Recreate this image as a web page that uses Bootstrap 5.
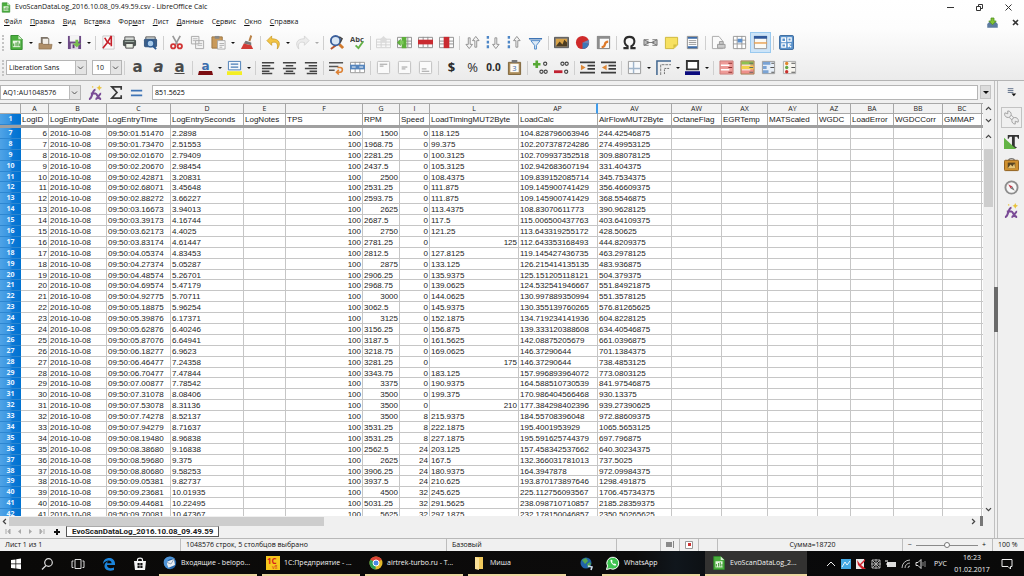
<!DOCTYPE html>
<html lang="ru">
<head>
<meta charset="utf-8">
<meta name="viewport" content="width=device-width, initial-scale=1">
<title>EvoScanDataLog_2016.10.08_09.49.59.csv - LibreOffice Calc</title>
<link href="https://cdn.jsdelivr.net/npm/bootstrap@5.3.0/dist/css/bootstrap.min.css" rel="stylesheet">
<style>
  :root { --ui: "Open Sans", "Noto Sans", sans-serif; --cell: "Liberation Sans", Arial, sans-serif; --line: #c6c6c6; --edge: #a8a8a8; }
  body { font: 7px/12px var(--ui); color: #111; background: #f0f0f0; }
  svg { display: block; }
  .shrinkable { min-width: 0; min-height: 0; }
  .app-top { background: linear-gradient(#fff 0, #fdfdfd 35%, #ebebeb 100%); border-bottom: 1px solid #b4b4b4; }
  .title-row { height: 14px; padding-left: 1px; }
  .win-ctl { gap: 8px; padding-right: 5px; }
  .menu-row { height: 16px; padding: 0 0 0 4px; gap: 8px; }
  .menu-row a { color: #111; text-decoration: none; }
  .bar-row { height: 25px; }
  .grip { width: 3px; height: 16px; margin: 0 1px 0 2px; border-left: 2px dotted #c4c4c4; flex: none; }
  .tb { width: 21px; height: 21px; padding: 0; border-radius: 0; border: 1px solid transparent; display: flex; align-items: center; justify-content: center; flex: none; }
  .tb svg { width: 15px; height: 15px; }
  .tb.active { background: #cce4f8; border-color: #99c9ef; }
  .dd { width: 8px; height: 21px; padding: 0; border: 0; background: none; display: flex; align-items: center; justify-content: center; flex: none; }
  .dd::after { content: ""; border: 2px solid transparent; border-top-color: #111; margin-top: 2px; }
  .dd:disabled::after { border-top-color: #aaa; }
  .gap-line { width: 1px; height: 14px; background: #cfcfcf; margin: 0 2px; flex: none; }
  .pick { height: 15px; border: 1px solid #b5b5b5; border-radius: 0; padding: 0 12px 0 2px; font: 7px/13px var(--ui); color: #111; appearance: none;
    background: #fff url("data:image/svg+xml,%3Csvg xmlns='http://www.w3.org/2000/svg' width='11' height='13'%3E%3Cpath d='M0 0h11v13H0z' fill='%23e4e4e4'/%3E%3Cpath d='M.5 0v13' stroke='%23bbb'/%3E%3Cpath d='M3 5.500l2.500 2.500 2.500-2.500' fill='none' stroke='%23555'/%3E%3C/svg%3E") no-repeat right center; }
  .pick-font { width: 81px; margin-right: 5px; }
  .pick-size { width: 30px; padding-left: 3px; }
  .pick-name { width: 81px; }
  .glyph { font: 700 15px/15px "DejaVu Sans", sans-serif; color: #4a4a4a; }
  .ink { font: 700 12px/9px "DejaVu Sans", sans-serif; color: #3c6eae; }
  .ink.tb { width: 15px; height: 15px; margin: 0 3px; border-bottom: 4px solid #7b0d10; }
  .money { font: 13px/15px "Open Sans", sans-serif; color: #2b2b2b; }
  .digits { font: 10px/15px "Open Sans", sans-serif; color: #2b2b2b; }
  .formula-row { height: 22px; padding: 0 3px 0 0; }
  .formula-row input { font: 7px/13px var(--ui); height: 15px; border: 1px solid #b5b5b5; border-radius: 0; padding: 0 2px; background: #fff; min-width: 0; }
  .expand { width: 11px; height: 14px; border: 1px solid #c4c4c4; background: #dcdcdc; padding: 0; margin-left: 2px; display: flex; align-items: center; justify-content: center; }
  .expand::after { content: ""; border: 3px solid transparent; border-top-color: #111; margin-top: 3px; }
  .grid-clip { overflow: hidden; }
  .calc { width: 100%; display: block; font: 8px/11px var(--cell); color: #222; background: #fff; }
  .calc thead, .calc tbody { display: grid; width: 100%; }
  .calc tr { display: grid; grid-template-columns: 21px 28px 58px 64px 73px 42px 77px 37px 30px 89px 79px 74px 50px 46px 50px 33px 43px 49px 39px minmax(3px, 1fr); min-height: 0; }
  .calc th, .calc td { padding: 0 1px; border-right: 1px solid var(--line); border-bottom: 1px solid var(--line); white-space: pre; overflow: hidden; font-weight: 400; min-width: 0; min-height: 0; }
  .calc tr > :last-child { border-right: 0; }
  .calc .letters th { height: 11px; font: 7px/10px var(--ui); text-align: center; background: #f2f2f2; border-color: var(--edge); border-top: 1px solid var(--edge); }
  .calc .letters th.sel-edge { border-right: 2px solid #3f9bea; }
  .calc .names td { height: 11px; border-bottom: 0; border-color: var(--edge); }
  .calc th.rowno { background: linear-gradient(90deg, #4fa3e6 0, #3795e2 45%, #0b78d6 58%, #0072d0 100%); color: #e8f4ff; font: 700 7px/10px var(--ui); text-align: center; border-color: #2d86d0; border-right: 0; }
  .calc thead { border-bottom: 3px solid #a0a0a0; }
  /* 36 equal rows share the height of the scrolled pane */
  .calc tbody { grid-template-rows: repeat(36, minmax(0, 1fr)); height: 392px; }
  .num { text-align: right; }
  .vbar { width: 11px; gap: 3px; padding: 1px 0 2px; }
  .vbar svg, .hbar svg { width: 9px; height: 9px; flex: none; }
  .vbar-thumb { width: 9px; height: 58px; background: #cdcdcd; margin: 5px 0 auto; }
  .hbar { height: 10px; padding-right: 11px; }
  .hbar-thumb { height: 9px; width: 32%; background: #cdcdcd; }
  .hbar-split { width: 3px; height: 10px; background: #777; margin-left: 2px; }
  .tab-row { height: 12px; padding-left: 5px; }
  .tab-row button { border: 0; background: none; padding: 0; width: 11px; height: 10px; }
  .sheet-tab { background: #fff; border: 1px solid #555; border-top-color: #aaa; padding: 0 5px; margin-left: 2px; font: 700 8px/9px Roboto, sans-serif; color: #222; text-decoration: none; }
  .splitter { width: 4px; border: 1px solid #c0c0c0; border-width: 0 1px; }
  .splitter span { height: 45px; width: 4px; background: #6a6a6a; margin-left: -1px; flex: none; }
  .side { width: 26px; gap: 2px; }
  .side .boxed { border-color: #c3c3c3; margin: 3px 0 1px; }
  .status { height: 13px; border-top: 1px solid #b8b8b8; line-height: 12px; }
  .status > div { border-right: 1px solid #bdbdbd; padding-left: 5px; overflow: hidden; white-space: nowrap; }
  .st-a { width: 181px; } .st-b { width: 266px; } .st-c { width: 170px; } .st-d { width: 44px; } .st-e { width: 19px; }
  .st-z { width: 90px; } .st-p { width: 31px; }
  .zoom { appearance: none; width: 62px; height: 8px; background: linear-gradient(#8a8a8a, #8a8a8a) center/100% 1px no-repeat; margin: 0; }
  .zoom::-webkit-slider-thumb { appearance: none; width: 6px; height: 6px; border-radius: 50%; border: 1px solid #777; background: #fff; }
  .taskbar-row { height: 25px; background: linear-gradient(90deg, #0a0908 0, #0c0b0b 62%, #10161c 66%, #0a0a0b 72%, #090909 100%); color: #f2f2f2; }
  .taskbar-row button { border: 0; background: none; color: inherit; padding: 0; height: 25px; flex: none; font: 7px/22px var(--ui); }
  .launch { width: 31px; display: flex; align-items: center; justify-content: center; }
  .launch svg, .win svg { width: 14px; height: 14px; flex: none; }
  .taskbar-row .win { width: 98px; margin-right: 5px; padding: 0 4px; display: flex; align-items: center; gap: 4px; border-bottom: 2px solid #ecd6a0; white-space: nowrap; text-align: left; }
  .taskbar-row .win.now { background: #333231; width: 102px; padding-left: 7px; margin: 0; }
  .tray { gap: 3px; }
  .tray svg { width: 12px; height: 12px; }
  .clock { line-height: 12px; width: 44px; text-align: center; }
</style>
</head>
<body class="vh-100 d-flex flex-column overflow-hidden">

<svg width="0" height="0" class="position-absolute" aria-hidden="true">
  <symbol id="doc" viewBox="0 0 16 16"><path d="M2 .5h8l4 4v11H2z" fill="#4caf3e" stroke="#2f8a2b"/><path d="M10 .5v4h4z" fill="#d7f0d0"/><path d="M4 6h8v7H4z" fill="#e9f7e4"/><path d="M5 12V9m2.500 3V8m2 4V7m2 5V9" stroke="#4a9c3c" stroke-width="1.200"/></symbol>
  <symbol id="open" viewBox="0 0 16 16"><path d="M3 2h7l2 2v7H3z" fill="#7e7468"/><path d="M5 4h6v6H5z" fill="#f3efe8"/><path d="M1 9h4l1 1h9l-1 5H1z" fill="#b08f68" stroke="#8a6c49" stroke-width=".7"/></symbol>
  <symbol id="save" viewBox="0 0 16 16"><path d="M1 1h14v14H1z" fill="#6d4a86"/><path d="M3 1h10v6H3z" fill="#f4f4f4"/><path d="M4 9h8v6H4z" fill="#dcd6e2"/><path d="M6 10h2v4H6z" fill="#5b3a74"/><path d="M9 5h3v4h3l-4.500 4L6 9h3z" fill="#77bf4b"/></symbol>
  <symbol id="pdf" viewBox="0 0 16 16"><path d="M2 1h12v14H2z" fill="#fafafa" stroke="#c9c9c9"/><path d="M2 14C6 10 9 5 11 1v11M4 3c1 3 3 5 6 7" fill="none" stroke="#c6202a" stroke-width="1.700"/></symbol>
  <symbol id="print" viewBox="0 0 16 16"><path d="M3 2h10v4H3z" fill="#d9dcd9" stroke="#555"/><rect x="1" y="5" width="14" height="7" rx="1.500" fill="#4f5854"/><path d="M4 9h8v5H4z" fill="#e9efe4" stroke="#444"/><path d="M3 7h10" stroke="#a8b4ac"/></symbol>
  <symbol id="preview" viewBox="0 0 16 16"><path d="M3 2h10v4H3z" fill="#d9dcd9" stroke="#555"/><rect x="1" y="4" width="14" height="9" rx="1.500" fill="#3f5f86"/><circle cx="8" cy="9" r="3.600" fill="#a9cbea" stroke="#2b5a93" stroke-width="1.400"/><path d="M11 12l3 3" stroke="#2b5a93" stroke-width="2"/></symbol>
  <symbol id="cut" viewBox="0 0 16 16"><path d="M4 1l5 9M12 1L7 10" stroke="#999" stroke-width="1.800"/><g fill="none" stroke="#d03434" stroke-width="2"><circle cx="4.500" cy="12" r="2.300"/><circle cx="11.500" cy="12" r="2.300"/></g></symbol>
  <symbol id="copy" viewBox="0 0 16 16"><path d="M1.500 1.500h8v8h-8zM6 6h8.500v8.500H6z" fill="#f4f4f4" stroke="#a9a9a9"/><path d="M3 4h5M3 6h3M8 9h5M8 11h5" stroke="#b5b5b5"/></symbol>
  <symbol id="paste" viewBox="0 0 16 16"><path d="M1 2h11v12H1z" fill="#c99a5b" stroke="#9b7442"/><path d="M4 1h5v3H4z" fill="#888"/><path d="M7 6h8v9H7z" fill="#fafafa" stroke="#aaa"/><path d="M9 9h5M9 11h5M9 13h3" stroke="#aaa"/></symbol>
  <symbol id="brush" viewBox="0 0 16 16"><path d="M11 0l2 1-2 6-2-1z" fill="#b98248"/><path d="M6 6l6 2v3L4 9z" fill="#777"/><path d="M4 9l8 2 2 4H1z" fill="#d13b35"/></symbol>
  <symbol id="undo" viewBox="0 0 16 16"><path d="M6 1L1 6l5 5V8c5-1 7 0 6 7 4-5 3-11-6-11z" fill="#f3c544" stroke="#c99a24" stroke-width=".8"/></symbol>
  <symbol id="redo" viewBox="0 0 16 16"><path d="M10 1l5 5-5 5V8c-5-1-7 0-6 7-4-5-3-11 6-11z" fill="#ececec" stroke="#cfcfcf" stroke-width=".8"/></symbol>
  <symbol id="find" viewBox="0 0 16 16"><path d="M9 8l6 6" stroke="#d27a2c" stroke-width="3"/><path d="M2 15l8-6" stroke="#b6532c" stroke-width="2"/><circle cx="7" cy="6" r="5" fill="#d9e6f4" stroke="#3b5f9c" stroke-width="2"/><path d="M11 2l3 2-2 4" fill="none" stroke="#444" stroke-width="1.500"/></symbol>
  <symbol id="rowadd" viewBox="0 0 16 16"><path d="M.5 4.500h15v9H.5zM.5 7.500h15M.5 10.500h15M5.500 4v9M10.500 4v9" fill="#f8f8f8" stroke="#d2d2d2"/><path d="M8 1l3 3v4H5V4z" fill="#dcdcdc"/></symbol>
  <symbol id="coladd" viewBox="0 0 16 16"><path d="M.5 2.500h15v11H.5zM.5 6.500h15M.5 9.500h15M11.500 2v11" fill="#fafafa" stroke="#8f8f8f"/><path d="M5 2h5v12H5zM0 8l4-4v8z" fill="#5cae3a"/><path d="M3 6h4v4H3z" fill="#7cc95a"/></symbol>
  <symbol id="rowdel" viewBox="0 0 16 16"><path d="M.5 2.500h15v11H.5zM5.500 2v11M10.500 2v11" fill="#fafafa" stroke="#8f8f8f"/><path d="M0 5h16v5H0z" fill="#c92a30"/></symbol>
  <symbol id="coldel" viewBox="0 0 16 16"><path d="M.5 2.500h15v11H.5zM.5 6.500h15M.5 9.500h15" fill="#fafafa" stroke="#8f8f8f"/><path d="M5 2h6v12H5z" fill="#c92a30"/></symbol>
  <symbol id="sort" viewBox="0 0 16 16"><path d="M3.500 3h2v7H8l-3.500 4.500L1 10h2.500zM10.500 13h2V6H15l-3.500-4.500L8 6h2.500z" fill="#f4f4f4" stroke="#8f8f8f"/></symbol>
  <symbol id="sortd" viewBox="0 0 16 16"><path d="M2 1v3M2 6v3M2 11v3" stroke="#4d86c6" stroke-width="2.500"/><path d="M9.500 3h2v7H14l-3.500 4.500L7 10h2.500z" fill="#f4f4f4" stroke="#8f8f8f"/></symbol>
  <symbol id="sorta" viewBox="0 0 16 16"><path d="M2 1v3M2 6v3M2 11v3" stroke="#4d86c6" stroke-width="2.500"/><path d="M9.500 13h2V6H14l-3.500-4.500L7 6h2.500z" fill="#f4f4f4" stroke="#8f8f8f"/></symbol>
  <symbol id="filter" viewBox="0 0 16 16"><path d="M1 4h14" stroke="#3e74b4" stroke-width="1.600"/><path d="M3 6h10L9 11v4H7v-4z" fill="#dce9f5" stroke="#4d86c6"/></symbol>
  <symbol id="image" viewBox="0 0 16 16"><path d="M.5 2.500h15v11H.5z" fill="#777" stroke="#555"/><path d="M2 4h12v8H2z" fill="#d8a348"/><path d="M2 12l4-5 3 3 2-5 3 3v4z" fill="#4d3d22"/></symbol>
  <symbol id="pie" viewBox="0 0 16 16"><circle cx="8" cy="8" r="7" fill="#cf2b2b"/><path d="M8 8l7 1a7 7 0 0 1-7 6z" fill="#3c78b8"/><path d="M8 8l7-3v4z" fill="#6a86b8"/></symbol>
  <symbol id="pivot" viewBox="0 0 16 16"><path d="M1.500 1.500h13v13h-13z" fill="#fafafa" stroke="#777"/><path d="M1 1h14v3H1zM1 4h3v11H1z" fill="#8d8d8d"/><path d="M6 13c6 0 1-6 7-6" fill="none" stroke="#df7a2a" stroke-width="2.400"/></symbol>
  <symbol id="omega" viewBox="0 0 16 16"><path d="M1.500 14H6v-2C1 9 2 2 8 2s7 7 2 10v2h4.500" fill="none" stroke="#2c2c2c" stroke-width="2.200"/></symbol>
  <symbol id="chain" viewBox="0 0 16 16"><path d="M1 5l6 3-6 3zM15 5L9 8l6 3zM1 5h5M10 5h5M1 11h5M10 11h5M4 8h8" fill="#bbb" stroke="#777"/></symbol>
  <symbol id="note" viewBox="0 0 16 16"><path d="M1.500 2.500h13v8l-4 4h-9z" fill="#f7e161" stroke="#cdb73c"/><path d="M14 10l-4 4v-4z" fill="#d6bf40"/></symbol>
  <symbol id="headf" viewBox="0 0 16 16"><path d="M2.500 1.500h11v13h-11z" fill="#fff" stroke="#888"/><path d="M3 3h10M3 13h10" stroke="#3d6ca8" stroke-width="2"/><path d="M4 6h8M4 8h8M4 10h8" stroke="#999"/></symbol>
  <symbol id="parea" viewBox="0 0 16 16"><path d="M1.500 1.500h7l4 5v8h-11z" fill="#fafafa" stroke="#aaa"/><path d="M7 10h8v4H7zM9 7h4v3H9z" fill="#ccc" stroke="#999"/></symbol>
  <symbol id="freeze" viewBox="0 0 16 16"><path d="M1.500 1.500h13v13h-13zM1 5.500h14M1 9.500h14M5.500 1v14M10.500 1v14" fill="#fff" stroke="#999"/><path d="M6 4h5v4H6z" fill="#5b8fcb"/></symbol>
  <symbol id="splitw" viewBox="0 0 16 16"><path d="M1.500 1.500h13v13h-13z" fill="#fbfbf6" stroke="#999"/><path d="M1 1h14v3H1z" fill="#30599b"/><path d="M1 8.500h14" stroke="#e8a050" stroke-width="1.500"/></symbol>
  <symbol id="draw" viewBox="0 0 16 16"><rect x=".5" y=".5" width="15" height="15" rx="1.500" fill="#5a92cb" stroke="#39689c"/><path d="M3 3h4v4H3zM9.500 3h3.500v3.500H9.500zM3 9.500h4v3.500H3zM9.500 10l3.500 3M10 13V9.500h3" fill="none" stroke="#fff" stroke-width="1.300"/></symbol>
  <symbol id="hilite" viewBox="0 0 16 16"><path d="M1.500 1.500h13v9h-13z" fill="#f5f9fd" stroke="#4a7cb5"/><path d="M4 4.500h8M4 7.500h8" stroke="#4a7cb5" stroke-width="1.300"/><path d="M0 12h16v4H0z" fill="#f4ee23"/></symbol>
  <symbol id="al" viewBox="0 0 16 16"><path d="M1 3h13M1 6h9M1 9h13M1 12h8M1 14.500h11" stroke="#444" stroke-width="1.600"/></symbol>
  <symbol id="ac" viewBox="0 0 16 16"><path d="M1 3h14M4 6h8M1 9h14M4 12h8M2 14.500h12" stroke="#444" stroke-width="1.600"/></symbol>
  <symbol id="ar" viewBox="0 0 16 16"><path d="M2 3h13M6 6h9M2 9h13M7 12h8M4 14.500h11" stroke="#444" stroke-width="1.600"/></symbol>
  <symbol id="wrap" viewBox="0 0 16 16"><path d="M0 3h15M0 7h10M0 11h6" stroke="#555" stroke-width="1.700"/><path d="M9 8h3c3 0 3 5 0 5H8m2.500-2.500L8 13l2.500 2.500" fill="none" stroke="#dd8133" stroke-width="1.700"/></symbol>
  <symbol id="merge" viewBox="0 0 16 16"><path d="M.5 2.500h15v11H.5zM5.500 2v11M10.500 2v11" fill="#fff" stroke="#999"/><path d="M0 5h16v5H0z" fill="#5585bd"/><path d="M2 7.500h4M10 7.500h4" stroke="#fff"/></symbol>
  <symbol id="vt" viewBox="0 0 16 16"><rect x="1.500" y="1.500" width="13" height="13" rx="1" fill="#fafafa" stroke="#bdbdbd"/><path d="M4 4.500h8M4 6.500h4" stroke="#999"/></symbol>
  <symbol id="vm" viewBox="0 0 16 16"><rect x="1.500" y="1.500" width="13" height="13" rx="1" fill="#fafafa" stroke="#bdbdbd"/><path d="M5 7.500h6M5 9.500h4" stroke="#999"/></symbol>
  <symbol id="vb" viewBox="0 0 16 16"><rect x="1.500" y="1.500" width="13" height="13" rx="1" fill="#fafafa" stroke="#bdbdbd"/><path d="M4 9.500h5M4 12h8" stroke="#999"/></symbol>
  <symbol id="decadd" viewBox="0 0 16 16"><path d="M0 4.500h8M4 .5v8" stroke="#57a935" stroke-width="2.800"/><g fill="none" stroke="#444" stroke-width="1.200"><circle cx="13" cy="4" r="1.700"/><circle cx="9" cy="12.500" r="1.700"/><circle cx="13.500" cy="12.500" r="1.700"/></g></symbol>
  <symbol id="decdel" viewBox="0 0 16 16"><path d="M0 12.500h9" stroke="#c02030" stroke-width="3"/><g fill="none" stroke="#444" stroke-width="1.200"><circle cx="9" cy="4" r="1.700"/><circle cx="13.500" cy="4" r="1.700"/><circle cx="13" cy="12.500" r="1.700"/></g></symbol>
  <symbol id="indin" viewBox="0 0 16 16"><path d="M0 2.500h16M8 6h8M8 9.500h8M0 13.500h16" stroke="#3c3c3c" stroke-width="1.700"/><path d="M1 5l5 3-5 3z" fill="#de8838"/></symbol>
  <symbol id="indout" viewBox="0 0 16 16"><path d="M0 2.500h16M8 6h8M8 9.500h8M0 13.500h16" stroke="#3c3c3c" stroke-width="1.700"/><path d="M6 5L1 8l5 3z" fill="#de8838"/></symbol>
  <symbol id="bord" viewBox="0 0 16 16"><path d="M1.500 1.500h13v13h-13z" fill="#f7f9fb" stroke="#999"/><path d="M7 2v12M2 9h12" stroke="#9fb4ca" stroke-width="1.500"/></symbol>
  <symbol id="bstyle" viewBox="0 0 16 16"><path d="M1 16V1h15" fill="none" stroke="#40668f" stroke-width="1.600"/><path d="M5 16V5h11" fill="none" stroke="#777" stroke-dasharray="3 1"/><path d="M9 15V9h6" fill="none" stroke="#666" stroke-dasharray="2 1"/></symbol>
  <symbol id="bcolor" viewBox="0 0 16 16"><path d="M2 1h12v9H2z" fill="#fff" stroke="#333" stroke-width="2"/><path d="M0 12h16v4H0z" fill="#0b0b7d"/></symbol>
  <symbol id="cf1" viewBox="0 0 16 16"><path d="M1 1h14v14H1z" fill="#ee9a97" stroke="#c9807c"/><path d="M2 5.500h9M2 10.500h9" stroke="#fff" stroke-width="1.600"/><path d="M10 3.500h4M10 8h4M10 13h4" stroke="#8b3030" stroke-width="1.200"/></symbol>
  <symbol id="cf2" viewBox="0 0 16 16"><path d="M1 1h14v14H1z" fill="#ee8f8a" stroke="#a08050"/><path d="M1.500 1.500h13V5h-13z" fill="#8cc152"/><path d="M1.500 6h13v4h-13z" fill="#f2d24b"/><path d="M2 5.500h9M2 10.500h9" stroke="#fff"/><path d="M10 3.500h4M10 8h4M10 13h4" stroke="#666" stroke-width="1.200"/></symbol>
  <symbol id="cf3" viewBox="0 0 16 16"><path d="M1.500 1.500h13v13h-13z" fill="#e6eef7" stroke="#999"/><path d="M2 3.500h8M2 8h4M2 12.500h6" stroke="#7aa3d4" stroke-width="3"/><path d="M11 3.500h3M10 8h4M11 13h3" stroke="#555" stroke-width="1.200"/></symbol>
  <symbol id="cf4" viewBox="0 0 16 16"><path d="M1.500 1.500h13v13h-13z" fill="#f7f5ef" stroke="#aaa"/><circle cx="5" cy="3.700" r="1.800" fill="#e0872c"/><circle cx="5" cy="8" r="1.800" fill="#62a744"/><circle cx="5" cy="12.500" r="1.800" fill="#c9302c"/><path d="M10 3.500h4M10 8h4M10 13h4" stroke="#555" stroke-width="1.200"/></symbol>
  <symbol id="fx" viewBox="0 0 16 16"><path d="M1 15c4 0 3-10 7-10M3 9h5M8 9c2 0 2 6 6 6M14 9c-2 0-3 6-6 6" fill="none" stroke="#7a4b96" stroke-width="2.200"/><path d="M12 0l1 2 2 1-2 1-1 2-1-2-2-1 2-1zM5 1l1 1-1 1-1-1z" fill="#e8c23a"/></symbol>
  <symbol id="sum" viewBox="0 0 16 16"><path d="M13 5V2H3l5.500 6L3 14h10v-3" fill="none" stroke="#3a3a3a" stroke-width="1.800"/></symbol>
  <symbol id="eq" viewBox="0 0 16 16"><path d="M1 6h12M1 11h12" stroke="#3f74b5" stroke-width="2"/></symbol>
  <symbol id="wrench" viewBox="0 0 16 16"><path d="M4 4l8 8" stroke="#a5a5a5" stroke-width="4"/><path d="M4 4l8 8" stroke="#f2f2f2" stroke-width="2.400"/><path d="M1 3a3.500 3.500 0 1 0 3-2v3zM15 13a3.500 3.500 0 1 0-3 2v-3z" fill="#ececec" stroke="#a0a0a0"/></symbol>
  <symbol id="styles" viewBox="0 0 16 16"><path d="M4 1h12v4h-1l-1-2h-2.500v10l2 1v1h-7v-1l2-1V3H6L5 5H4z" fill="#333"/><path d="M0 4l13 12H0z" fill="#62b344"/></symbol>
  <symbol id="gallery" viewBox="0 0 16 16"><path d="M5 4c0-3 6-3 6 0" fill="none" stroke="#777" stroke-width="1.500"/><rect x=".5" y="3.500" width="15" height="11" rx="1" fill="#d0912f" stroke="#8d5b18"/><path d="M4 6h8v6H4z" fill="#5a4523"/><path d="M4 12l3-4 2 2 2-3 1 5z" fill="#e6c67a"/></symbol>
  <symbol id="compass" viewBox="0 0 16 16"><circle cx="8" cy="8" r="6.500" fill="#f7f7f7" stroke="#8d8d8d" stroke-width="2"/><path d="M4.500 4.500L9 7l-2 2z" fill="#c43c4b"/><path d="M11.500 11.500L7 9l2-2z" fill="#777"/></symbol>
  <symbol id="burger" viewBox="0 0 16 16"><path d="M4 5h6M4 7h6M4 9h6" stroke="#5a6b85"/><path d="M8 10h5l-2.500 3z" fill="#111"/></symbol>
  <symbol id="up" viewBox="0 0 16 16"><path d="M3.500 10.500L8 6l4.500 4.500" fill="none" stroke="#444" stroke-width="2.200"/></symbol>
  <symbol id="down" viewBox="0 0 16 16"><path d="M3.500 5.500L8 10l4.500-4.500" fill="none" stroke="#444" stroke-width="2.200"/></symbol>
  <symbol id="left" viewBox="0 0 16 16"><path d="M10.500 3.500L6 8l4.500 4.500" fill="none" stroke="#444" stroke-width="2.200"/></symbol>
  <symbol id="right" viewBox="0 0 16 16"><path d="M5.500 3.500L10 8l-4.500 4.500" fill="none" stroke="#444" stroke-width="2.200"/></symbol>
</svg>

<header class="app-top flex-shrink-0">
  <div class="title-row d-flex align-items-center">
    <svg width="10" height="11" class="me-1"><use href="#doc"/></svg>
    <span>EvoScanDataLog_2016.10.08_09.49.59.csv - LibreOffice Calc</span>
    <div class="win-ctl ms-auto d-flex">
      <button class="tb btn" aria-label="Свернуть"><svg viewBox="0 0 15 15"><path d="M4 7.500h7" stroke="#333"/></svg></button>
      <button class="tb btn" aria-label="Свернуть в окно"><svg viewBox="0 0 15 15"><path d="M4.500 6.500h4v4h-4zM6.500 6V4.500h4v4H9" fill="none" stroke="#333"/></svg></button>
      <button class="tb btn" aria-label="Закрыть"><svg viewBox="0 0 15 15"><path d="M4.500 4.500l6 6m0-6l-6 6" stroke="#333"/></svg></button>
    </div>
  </div>
  <nav class="menu-row d-flex align-items-center">
    <a href="#"><u>Ф</u>айл</a><a href="#"><u>П</u>равка</a><a href="#"><u>В</u>ид</a><a href="#">Вст<u>а</u>вка</a><a href="#">Фор<u>м</u>ат</a><a href="#"><u>Л</u>ист</a><a href="#"><u>Д</u>анные</a><a href="#">С<u>е</u>рвис</a><a href="#"><u>О</u>кно</a><a href="#"><u>С</u>правка</a>
    <div class="ms-auto d-flex">
      <button class="tb btn" aria-label="Обновление"><svg viewBox="0 0 20 20"><path d="M3 12l3-3h8l3 3v5H3z" fill="#5c7ba0"/><path d="M8 4h4v4h3l-5 5-5-5h3z" fill="#84c433" stroke="#4c8e1f"/></svg></button>
      <button class="tb btn" aria-label="Закрыть документ"><svg viewBox="0 0 15 15"><path d="M7 5l5 5m0-5l-5 5" stroke="#333" stroke-width="1.600"/></svg></button>
    </div>
  </nav>
  <div class="bar-row d-flex align-items-center" role="toolbar" aria-label="Стандартная">
    <span class="grip"></span>
    <button class="tb btn" aria-label="Создать"><svg><use href="#doc"/></svg></button><button class="dd" aria-label="Ещё: создать"></button>
    <button class="tb btn" aria-label="Открыть"><svg><use href="#open"/></svg></button><button class="dd" aria-label="Ещё: открыть"></button>
    <button class="tb btn" aria-label="Сохранить"><svg><use href="#save"/></svg></button><button class="dd" aria-label="Ещё: сохранить"></button>
    <span class="gap-line"></span>
    <button class="tb btn" aria-label="PDF"><svg><use href="#pdf"/></svg></button>
    <button class="tb btn" aria-label="Печать"><svg><use href="#print"/></svg></button>
    <button class="tb btn" aria-label="Просмотр"><svg><use href="#preview"/></svg></button>
    <span class="gap-line"></span>
    <button class="tb btn" aria-label="Вырезать"><svg><use href="#cut"/></svg></button>
    <button class="tb btn" aria-label="Копировать"><svg><use href="#copy"/></svg></button>
    <button class="tb btn" aria-label="Вставить"><svg><use href="#paste"/></svg></button><button class="dd" aria-label="Ещё: вставить"></button>
    <button class="tb btn" aria-label="Копировать формат"><svg><use href="#brush"/></svg></button>
    <span class="gap-line"></span>
    <button class="tb btn" aria-label="Отменить"><svg><use href="#undo"/></svg></button><button class="dd" aria-label="Ещё: отменить"></button>
    <button class="tb btn" aria-label="Вернуть"><svg><use href="#redo"/></svg></button><button class="dd" disabled aria-label="Ещё: вернуть"></button>
    <span class="gap-line"></span>
    <button class="tb btn" aria-label="Найти"><svg><use href="#find"/></svg></button>
    <button class="tb btn" aria-label="Орфография"><svg viewBox="0 0 16 16"><text x="0" y="7" font-size="8" font-weight="700" fill="#444">Abc</text><path d="M6 11l3 3 5-7" fill="none" stroke="#64b246" stroke-width="2"/></svg></button>
    <span class="gap-line"></span>
    <button class="tb btn" aria-label="Вставить строку"><svg><use href="#rowadd"/></svg></button>
    <button class="tb btn" aria-label="Вставить столбец"><svg><use href="#coladd"/></svg></button>
    <button class="tb btn" aria-label="Удалить строку"><svg><use href="#rowdel"/></svg></button>
    <button class="tb btn" aria-label="Удалить столбец"><svg><use href="#coldel"/></svg></button>
    <span class="gap-line"></span>
    <button class="tb btn" aria-label="Сортировка"><svg><use href="#sort"/></svg></button>
    <button class="tb btn" aria-label="По возрастанию"><svg><use href="#sortd"/></svg></button>
    <button class="tb btn" aria-label="По убыванию"><svg><use href="#sorta"/></svg></button>
    <button class="tb btn" aria-label="Автофильтр"><svg><use href="#filter"/></svg></button>
    <span class="gap-line"></span>
    <button class="tb btn" aria-label="Изображение"><svg><use href="#image"/></svg></button>
    <button class="tb btn" aria-label="Диаграмма"><svg><use href="#pie"/></svg></button>
    <button class="tb btn" aria-label="Сводная таблица"><svg><use href="#pivot"/></svg></button>
    <span class="gap-line"></span>
    <button class="tb btn" aria-label="Специальный символ"><svg><use href="#omega"/></svg></button>
    <button class="tb btn" aria-label="Гиперссылка"><svg><use href="#chain"/></svg></button>
    <button class="tb btn" aria-label="Примечание"><svg><use href="#note"/></svg></button>
    <button class="tb btn" aria-label="Колонтитулы"><svg><use href="#headf"/></svg></button>
    <span class="gap-line"></span>
    <button class="tb btn" aria-label="Область печати"><svg><use href="#parea"/></svg></button>
    <button class="tb btn" aria-label="Закрепить"><svg><use href="#freeze"/></svg></button>
    <button class="tb btn active" aria-label="Разделить окно"><svg><use href="#splitw"/></svg></button>
    <span class="gap-line"></span>
    <button class="tb btn" aria-label="Рисование"><svg><use href="#draw"/></svg></button>
  </div>
  <div class="bar-row d-flex align-items-center" role="toolbar" aria-label="Форматирование">
    <span class="grip"></span>
    <select class="pick pick-font" aria-label="Гарнитура"><option>Liberation Sans</option></select>
    <select class="pick pick-size" aria-label="Кегль"><option>10</option></select>
    <span class="gap-line"></span>
    <button class="tb btn glyph" aria-label="Полужирный">a</button>
    <button class="tb btn glyph fst-italic" aria-label="Курсив">a</button>
    <button class="tb btn glyph text-decoration-underline" aria-label="Подчёркнутый">a</button>
    <span class="gap-line"></span>
    <button class="tb btn ink" aria-label="Цвет шрифта">a</button><button class="dd" aria-label="Ещё: цвет шрифта"></button>
    <button class="tb btn" aria-label="Цвет фона"><svg><use href="#hilite"/></svg></button><button class="dd" aria-label="Ещё: цвет фона"></button>
    <span class="gap-line"></span>
    <button class="tb btn" aria-label="Влево"><svg><use href="#al"/></svg></button>
    <button class="tb btn" aria-label="По центру"><svg><use href="#ac"/></svg></button>
    <button class="tb btn" aria-label="Вправо"><svg><use href="#ar"/></svg></button>
    <span class="gap-line"></span>
    <button class="tb btn" aria-label="Перенос текста"><svg><use href="#wrap"/></svg></button>
    <button class="tb btn" aria-label="Объединить"><svg><use href="#merge"/></svg></button>
    <span class="gap-line"></span>
    <button class="tb btn" aria-label="По верху"><svg><use href="#vt"/></svg></button>
    <button class="tb btn" aria-label="По середине"><svg><use href="#vm"/></svg></button>
    <button class="tb btn" aria-label="По низу"><svg><use href="#vb"/></svg></button>
    <span class="gap-line"></span>
    <button class="tb btn money fw-bold" aria-label="Денежный">$</button>
    <button class="tb btn money" aria-label="Процентный">%</button>
    <button class="tb btn digits fw-bold" aria-label="Числовой">0.0</button>
    <button class="tb btn" aria-label="Дата"><svg viewBox="0 0 16 16"><path d="M1.500 2.500h13v13h-13z" fill="#a98a58" stroke="#7d6339"/><path d="M3.500 4h9v9h-9z" fill="#fdfbf5"/><path d="M5 0h6v3H5z" fill="#777"/><text x="5.500" y="11.500" font-size="8" fill="#3b66a5">3</text></svg></button>
    <span class="gap-line"></span>
    <button class="tb btn" aria-label="Добавить разряд"><svg><use href="#decadd"/></svg></button>
    <button class="tb btn" aria-label="Удалить разряд"><svg><use href="#decdel"/></svg></button>
    <span class="gap-line"></span>
    <button class="tb btn" aria-label="Увеличить отступ"><svg><use href="#indin"/></svg></button>
    <button class="tb btn" aria-label="Уменьшить отступ"><svg><use href="#indout"/></svg></button>
    <span class="gap-line"></span>
    <button class="tb btn" aria-label="Обрамление"><svg><use href="#bord"/></svg></button><button class="dd" aria-label="Ещё: обрамление"></button>
    <button class="tb btn" aria-label="Стиль линии"><svg><use href="#bstyle"/></svg></button><button class="dd" aria-label="Ещё: стиль линии"></button>
    <button class="tb btn" aria-label="Цвет линии"><svg><use href="#bcolor"/></svg></button><button class="dd" aria-label="Ещё: цвет линии"></button>
    <span class="gap-line"></span>
    <button class="tb btn" aria-label="Условное форматирование"><svg><use href="#cf1"/></svg></button>
    <button class="tb btn" aria-label="Цветовая шкала"><svg><use href="#cf2"/></svg></button>
    <button class="tb btn" aria-label="Гистограмма"><svg><use href="#cf3"/></svg></button>
    <button class="tb btn" aria-label="Набор значков"><svg><use href="#cf4"/></svg></button>
  </div>
</header>

<main class="d-flex flex-grow-1 shrinkable">
  <section class="d-flex flex-column flex-grow-1 shrinkable">
    <div class="formula-row d-flex align-items-center flex-shrink-0">
      <select class="pick pick-name" aria-label="Поле имени"><option>AQ1:AU1048576</option></select>
      <button class="tb btn ms-1" aria-label="Мастер функций"><svg><use href="#fx"/></svg></button>
      <button class="tb btn" aria-label="Сумма"><svg><use href="#sum"/></svg></button>
      <button class="tb btn me-1" aria-label="Функция"><svg><use href="#eq"/></svg></button>
      <input class="flex-grow-1" type="text" value="851.5625" aria-label="Строка ввода">
      <button class="expand" aria-label="Развернуть строку ввода"></button>
    </div>
    <div class="d-flex flex-grow-1 shrinkable">
      <div class="grid-clip flex-grow-1">
        <table class="calc" id="calc"><thead></thead><tbody></tbody></table>
      </div>
      <div class="vbar d-flex flex-column align-items-center">
        <svg><use href="#up"/></svg><svg><use href="#down"/></svg>
        <svg class="mt-1"><use href="#up"/></svg>
        <div class="vbar-thumb"></div>
        <svg><use href="#down"/></svg>
      </div>
    </div>
    <div class="hbar d-flex align-items-center flex-shrink-0">
      <svg><use href="#left"/></svg><div class="hbar-thumb"></div><svg class="ms-auto"><use href="#right"/></svg><span class="hbar-split"></span>
    </div>
    <div class="tab-row d-flex align-items-start flex-shrink-0">
      <button aria-label="Первый лист"><svg width="8" height="8" viewBox="0 0 8 8"><path d="M1 2v5M5 2L3 4.500 5 7z" stroke="#aaa" fill="#aaa"/></svg></button>
      <button aria-label="Предыдущий лист"><svg width="8" height="8" viewBox="0 0 8 8"><path d="M5 2L2 4.500 5 7z" fill="#aaa"/></svg></button>
      <button aria-label="Следующий лист"><svg width="8" height="8" viewBox="0 0 8 8"><path d="M2 2l3 2.500L2 7z" fill="#aaa"/></svg></button>
      <button aria-label="Последний лист"><svg width="8" height="8" viewBox="0 0 8 8"><path d="M6 2v5M2 2l2 2.500L2 7z" stroke="#aaa" fill="#aaa"/></svg></button>
      <button class="ms-1" aria-label="Добавить лист"><svg width="8" height="8" viewBox="0 0 8 8"><path d="M4 2v6M1 5h6" stroke="#111" stroke-width="2"/></svg></button>
      <a class="sheet-tab" href="#">EvoScanDataLog_2016.10.08_09.49.59</a>
    </div>
  </section>
  <div class="splitter d-flex align-items-center flex-shrink-0"><span></span></div>
  <aside class="side d-flex flex-column align-items-center flex-shrink-0">
    <button class="tb btn" aria-label="Параметры боковой панели"><svg><use href="#burger"/></svg></button>
    <button class="tb btn boxed" aria-label="Свойства"><svg><use href="#wrench"/></svg></button>
    <button class="tb btn" aria-label="Стили"><svg><use href="#styles"/></svg></button>
    <button class="tb btn" aria-label="Галерея"><svg><use href="#gallery"/></svg></button>
    <button class="tb btn" aria-label="Навигатор"><svg><use href="#compass"/></svg></button>
    <button class="tb btn" aria-label="Функции"><svg><use href="#fx"/></svg></button>
  </aside>
</main>

<footer class="flex-shrink-0">
  <div class="status d-flex">
    <div class="st-a">Лист 1 из 1</div>
    <div class="st-b">1048576 строк, 5 столбцов выбрано</div>
    <div class="st-c">Базовый</div>
    <div class="st-d"></div>
    <div class="st-e"><svg width="9" height="11" viewBox="0 0 9 11"><path d="M0 3h6v5H0z" fill="#8a8a8a"/><path d="M7.500 2v7" stroke="#888"/></svg></div>
    <div class="st-e"><svg width="9" height="11" viewBox="0 0 9 11"><path d="M.5 2.500h7v7h-7z" fill="#fff" stroke="#999"/><path d="M3 4h3v3H3z" fill="#c33"/></svg></div>
    <div class="st-e"></div>
    <div class="flex-grow-1 text-center">Сумма=18720</div>
    <div class="st-z d-flex align-items-center">−<input class="zoom mx-1" type="range" min="0" max="100" value="50" aria-label="Масштаб">+</div>
    <div class="st-p border-0">100 %</div>
  </div>
  <div class="taskbar-row d-flex align-items-center">
    <button class="launch" aria-label="Пуск"><svg viewBox="0 0 14 14"><path d="M2 3l4.500-.6v4.200H2zM7.200 2.300L12 1.600v5H7.200zM2 7.300h4.500v4.200L2 11zM7.200 7.300H12v5l-4.800-.7z" fill="#fff"/></svg></button>
    <button class="launch" aria-label="Поиск"><svg viewBox="0 0 14 14"><circle cx="8.500" cy="5.500" r="3.800" fill="none" stroke="#ddd" stroke-width="1.200"/><path d="M6 8.500L2 12.500" stroke="#ddd" stroke-width="1.300"/></svg></button>
    <button class="launch" aria-label="Представление задач"><svg viewBox="0 0 14 14"><path d="M4 2.500h6v9H4zM2.500 4H1v6.500h1.500M11.500 4H13v6.500h-1.500" fill="none" stroke="#ddd"/></svg></button>
    <button class="launch" aria-label="Edge"><svg viewBox="0 0 14 14"><path d="M1 7C1-1 13-1 13 6.500V8H5c0 3.500 4 4 7 2.500v2.500C7 15 2 13 2.500 8.500 3 6 4.500 5 6.500 4.300 5.500 5 5.200 5.500 5 6.200h4.600C9.500 2 3.500 3 1 7z" fill="#1c85dc"/></svg></button>
    <button class="launch" aria-label="Магазин"><svg viewBox="0 0 14 14"><path d="M1 4h12l-1 9H2z" fill="#f5f5f5"/><path d="M4.500 5V3c0-2.500 5-2.500 5 0v2" fill="none" stroke="#f5f5f5" stroke-width="1.200"/><path d="M4.500 6h2.200v2.200H4.500zM7.300 6h2.200v2.200H7.300zM4.500 8.800h2.200V11H4.500zM7.300 8.800h2.200V11H7.300z" fill="#111"/></svg></button>
    <button class="win ms-1"><svg viewBox="0 0 14 14"><circle cx="7" cy="7" r="6.200" fill="#2464a8"/><path d="M3 6l8-3 1 6-7 3z" fill="#e9edf1"/><path d="M3 6l5 2 3-5" fill="none" stroke="#8fa5bd"/><path d="M1 4c3-5 9-4 11-1-4-1-8 0-8 4s2 5 4 6C2 13 0 9 1 4z" fill="#4f94d6"/></svg>Входящие - belopo...</button>
    <button class="win"><svg viewBox="0 0 14 14"><path d="M0 0h14v14H0z" fill="#f7c71c"/><text x="1" y="8" font-size="8" font-weight="700" fill="#d4231c">1С</text><text x="6" y="13" font-size="5" fill="#d4231c">v8</text></svg>1С:Предприятие - ...</button>
    <button class="win"><svg viewBox="0 0 14 14"><circle cx="7" cy="7" r="6.500" fill="#e2b92b"/><path d="M7 7L1.400 3.700A6.500 6.500 0 0 1 12.600 3.700z" fill="#dc4437"/><path d="M7 7L1.400 3.700A6.500 6.500 0 0 0 6.500 13.500z" fill="#2e9e57"/><circle cx="7" cy="7" r="3" fill="#4b88e6" stroke="#fff"/></svg>airtrek-turbo.ru - T...</button>
    <button class="win"><svg viewBox="0 0 14 14"><path d="M3 1h8v12H3z" fill="#f0c95c"/><path d="M3 1l4 1v12l-4-1z" fill="#fae19a"/></svg>Миша</button>
    <button class="launch" aria-label="Сеть"><svg viewBox="0 0 14 14"><circle cx="6" cy="6" r="5.500" fill="#2163a8"/><path d="M2 3l4-2 2 3-3 3zM7 7l3-2 1 2-3 4z" fill="#57a84f"/><path d="M8 9l4 1-1 3" fill="none" stroke="#cde" stroke-width="1.600"/></svg></button>
    <button class="win"><svg viewBox="0 0 14 14"><path d="M.5 13.500l1-3.500A6 6 0 1 1 4.200 12.600z" fill="#3fc351" stroke="#fff"/><path d="M4.500 4c0 3 2.500 5.500 5 5.700l.7-1.500-1.600-.8-.7.7C7 7.700 6.300 7 6 6l.6-.7L6 3.700z" fill="#fff"/></svg>WhatsApp</button>
    <button class="win now"><svg><use href="#doc"/></svg>EvoScanDataLog_2...</button>
    <div class="tray d-flex align-items-center ms-auto">
      <svg viewBox="0 0 12 12"><path d="M2 8l4-4 4 4" fill="none" stroke="#eee"/></svg>
      <svg viewBox="0 0 12 12"><path d="M1 1h10v10H1z" fill="#45a9e4"/><path d="M2 9l3-5 2 3 3-4" fill="none" stroke="#e8f6ff"/></svg>
      <svg viewBox="0 0 12 12"><path d="M1 1h8v10H1z" fill="#e9e9e9"/><path d="M2 2l3 4 5-5v2L6 7l5 4H7L3 7z" fill="#d0202a"/></svg>
      <svg viewBox="0 0 12 12"><path d="M6 1v10M1 6h10M2 2l8 8M10 2l-8 8M2 2h8v8H2z" fill="none" stroke="#aaa"/></svg>
      <svg viewBox="0 0 12 12"><path d="M2 4h9v5H2z" fill="#ddd"/><path d="M0 3h3M1 6h3" stroke="#fff"/></svg>
      <svg viewBox="0 0 12 12"><path d="M2 10a8 8 0 0 1 8-8M5 10a5 5 0 0 1 5-5M8 10a2 2 0 0 1 2-2" fill="none" stroke="#bbb"/></svg>
      <svg viewBox="0 0 12 12"><path d="M1 4.500h2l3-3v9l-3-3H1z" fill="none" stroke="#ddd"/><path d="M8 4v4M10 3v6" stroke="#888"/></svg>
      <span class="ms-1">РУС</span>
      <div class="clock">16:23<br>01.02.2017</div>
      <svg class="mx-1" viewBox="0 0 12 12"><path d="M1 1.500h10v7H9.500v2.500L7 8.500H1z" fill="none" stroke="#eee"/></svg>
      <span class="ms-1"></span>
    </div>
  </div>
</footer>

<script src="https://cdn.jsdelivr.net/npm/bootstrap@5.3.0/dist/js/bootstrap.bundle.min.js"></script>
<script>
const letters = ['', 'A', 'B', 'C', 'D', 'E', 'F', 'G', 'I', 'L', 'AP', 'AV', 'AW', 'AX', 'AY', 'AZ', 'BA', 'BB', 'BC', ''];
const names = ['LogID', 'LogEntryDate', 'LogEntryTime', 'LogEntrySeconds', 'LogNotes', 'TPS', 'RPM', 'Speed', 'LoadTimingMUT2Byte', 'LoadCalc', 'AirFlowMUT2Byte', 'OctaneFlag', 'EGRTemp', 'MATScaled', 'WGDC', 'LoadError', 'WGDCCorr', 'GMMAP', 'M'];
// time, seconds, RPM, speed, LoadTiming, LoadCalc, AirFlow
const log = `01.51470 2.2898 1500 0 118.125 104.828796063946 244.42546875
01.73470 2.51553 1968.75 0 99.375 102.207378724286 274.49953125
02.01670 2.79409 2281.25 0 100.3125 102.709937352518 309.88078125
02.20670 2.98454 2437.5 0 105.3125 102.942683607194 331.404375
02.42871 3.20831 2500 0 108.4375 109.839152085714 345.7534375
02.68071 3.45648 2531.25 0 111.875 109.145900741429 356.46609375
02.88272 3.66227 2593.75 0 111.875 109.145900741429 368.5546875
03.16673 3.94013 2625 0 113.4375 108.83070611773 390.9628125
03.39173 4.16744 2687.5 0 117.5 115.006500437763 403.64109375
03.62173 4.4025 2750 0 121.25 113.643319255172 428.50625
03.83174 4.61447 2781.25 0 125 112.643353168493 444.8209375
04.05374 4.83453 2812.5 0 127.8125 119.145427436735 463.2978125
04.27374 5.05287 2875 0 133.125 126.215414135135 483.936875
04.48574 5.26701 2906.25 0 135.9375 125.151205118121 504.379375
04.69574 5.47179 2968.75 0 139.0625 124.532541946667 551.84921875
04.92775 5.70711 3000 0 144.0625 130.997889350994 551.3578125
05.18875 5.96254 3062.5 0 145.9375 130.355139760265 576.81265625
05.39876 6.17371 3125 0 152.1875 134.719234141936 604.8228125
05.62876 6.40246 3156.25 0 156.875 139.333120388608 634.40546875
05.87076 6.64941 3187.5 0 161.5625 142.08875205679 661.0396875
06.18277 6.9623 3218.75 0 169.0625 146.37290644 701.1384375
06.46477 7.24358 3281.25 0 175 146.37290644 738.4853125
06.70477 7.47844 3343.75 0 183.125 157.996893964072 773.0803125
07.00877 7.78542 3375 0 190.9375 164.588510730539 841.97546875
07.31078 8.08406 3500 0 199.375 170.986404566468 930.13375
07.53078 8.31136 3500 0 210 177.384298402396 939.27390625
07.74278 8.52137 3500 8 215.9375 184.55708396048 972.88609375
07.94279 8.71637 3531.25 8 222.1875 195.4001953929 1065.5653125
08.19480 8.96838 3531.25 8 227.1875 195.591625744379 697.796875
08.38680 9.16838 2562.5 24 203.125 157.458342537662 640.30234375
08.59680 9.375 2625 24 167.5 132.366031781013 737.5025
08.80680 9.58253 3906.25 24 180.9375 164.3947878 972.09984375
09.05381 9.82737 3937.5 24 210.625 193.870173897646 1298.491875
09.23681 10.01935 4500 32 245.625 225.112756093567 1706.45734375
09.44681 10.22495 5031.25 32 291.5625 238.098710710857 2185.28359375
09.70081 10.47367 5625 32 297.1875 232.178150046857 2350.50265625`.split('\n').map(r => r.split(' '));

const cell = v => `<td${/^\d+$/.test(v) ? ' class="num"' : ''}>${v}</td>`;
document.querySelector('#calc thead').innerHTML =
  '<tr class="letters">' + letters.map(l => `<th scope="col"${l === 'AP' ? ' class="sel-edge"' : ''}>${l}</th>`).join('') + '</tr>' +
  '<tr class="names"><th class="rowno" scope="row">1</th>' + names.map(n => `<td>${n}</td>`).join('') + '</tr>';
document.querySelector('#calc tbody').innerHTML = log.map(([t, s, rpm, sp, lt, lc, af], i) =>
  `<tr><th class="rowno" scope="row">${i + 7}</th>` +
  [String(i + 6), '2016-10-08', '09:50:' + t, s, '', '100', rpm, sp, lt, lc, af, '', '', '', '', '', '', '', ''].map(cell).join('') + '</tr>').join('');
</script>
</body>
</html>
